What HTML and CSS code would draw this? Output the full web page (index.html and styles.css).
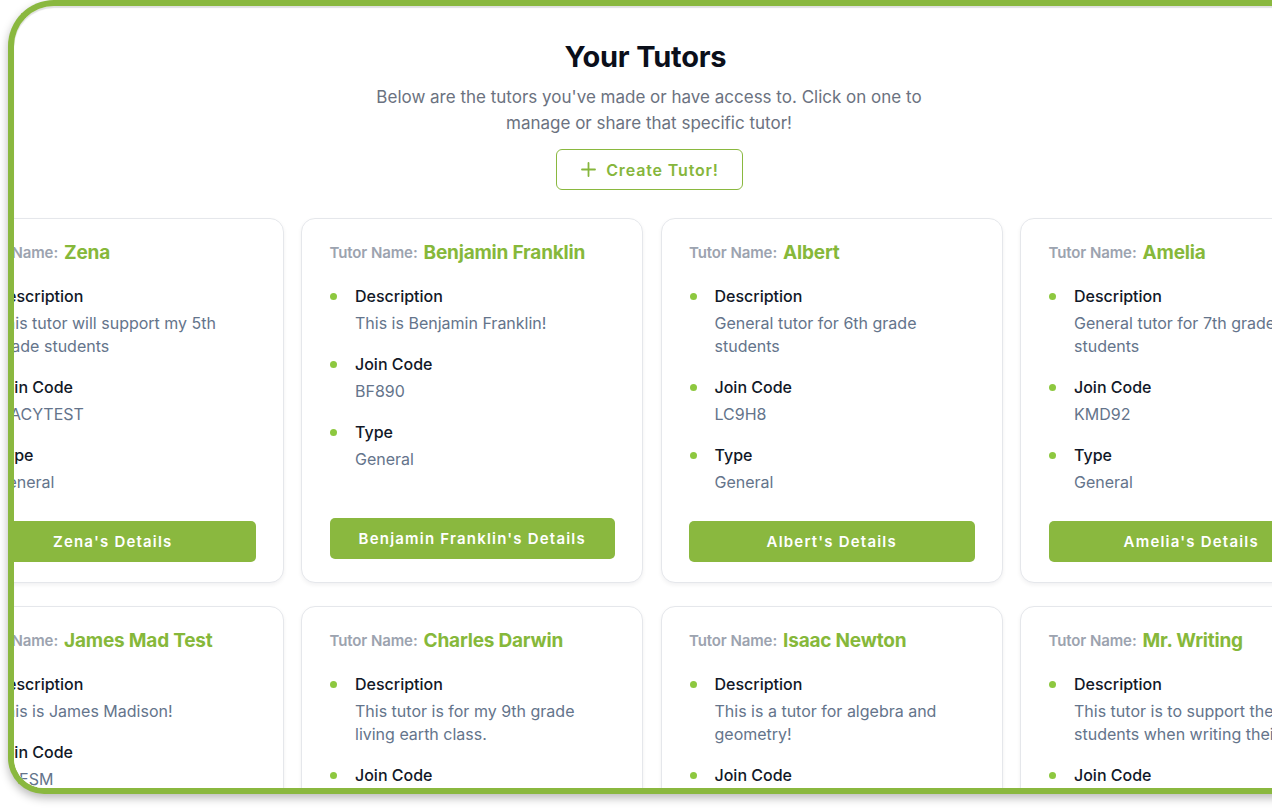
FILE: index.html
```html
<!DOCTYPE html>
<html lang="en">
<head>
<meta charset="utf-8">
<title>Your Tutors</title>
<link rel="stylesheet" href="styles.css">
</head>
<body>
<div class="frame">
  <div class="page">
    <header class="intro">
      <h1 class="title">Your Tutors</h1>
      <p class="subtitle">Below are the tutors you've made or have access to. Click on one to manage or share that specific tutor!</p>
      <button class="create-btn">
        <svg class="plus" width="15" height="15" viewBox="0 0 15 15"><path d="M7.5 1v13M1 7.5h13" stroke="currentColor" stroke-width="1.8" stroke-linecap="round" fill="none"/></svg>
        <span>Create Tutor!</span>
      </button>
    </header>

    <section class="grid">
      <article class="card">
        <h2 class="card-title"><span class="label-name">Tutor Name:</span> <span class="name">Zena</span></h2>
        <ul class="facts">
          <li><span class="fact-label">Description</span><span class="fact-value">This tutor will support my 5th grade students</span></li>
          <li><span class="fact-label">Join Code</span><span class="fact-value">MACYTEST</span></li>
          <li><span class="fact-label">Type</span><span class="fact-value">General</span></li>
        </ul>
        <button class="details-btn">Zena's Details</button>
      </article>

      <article class="card">
        <h2 class="card-title"><span class="label-name">Tutor Name:</span> <span class="name">Benjamin Franklin</span></h2>
        <ul class="facts">
          <li><span class="fact-label">Description</span><span class="fact-value">This is Benjamin Franklin!</span></li>
          <li><span class="fact-label">Join Code</span><span class="fact-value">BF890</span></li>
          <li><span class="fact-label">Type</span><span class="fact-value">General</span></li>
        </ul>
        <button class="details-btn">Benjamin Franklin's Details</button>
      </article>

      <article class="card">
        <h2 class="card-title"><span class="label-name">Tutor Name:</span> <span class="name">Albert</span></h2>
        <ul class="facts">
          <li><span class="fact-label">Description</span><span class="fact-value">General tutor for 6th grade students</span></li>
          <li><span class="fact-label">Join Code</span><span class="fact-value">LC9H8</span></li>
          <li><span class="fact-label">Type</span><span class="fact-value">General</span></li>
        </ul>
        <button class="details-btn">Albert's Details</button>
      </article>

      <article class="card">
        <h2 class="card-title"><span class="label-name">Tutor Name:</span> <span class="name">Amelia</span></h2>
        <ul class="facts">
          <li><span class="fact-label">Description</span><span class="fact-value">General tutor for 7th grade students</span></li>
          <li><span class="fact-label">Join Code</span><span class="fact-value">KMD92</span></li>
          <li><span class="fact-label">Type</span><span class="fact-value">General</span></li>
        </ul>
        <button class="details-btn">Amelia's Details</button>
      </article>

      <article class="card">
        <h2 class="card-title"><span class="label-name">Tutor Name:</span> <span class="name">James Mad Test</span></h2>
        <ul class="facts">
          <li><span class="fact-label">Description</span><span class="fact-value">This is James Madison!</span></li>
          <li><span class="fact-label">Join Code</span><span class="fact-value">JMESM</span></li>
          <li><span class="fact-label">Type</span><span class="fact-value">General</span></li>
        </ul>
        <button class="details-btn">James Mad Test's Details</button>
      </article>

      <article class="card">
        <h2 class="card-title"><span class="label-name">Tutor Name:</span> <span class="name">Charles Darwin</span></h2>
        <ul class="facts">
          <li><span class="fact-label">Description</span><span class="fact-value">This tutor is for my 9th grade living earth class.</span></li>
          <li><span class="fact-label">Join Code</span><span class="fact-value">CD123</span></li>
          <li><span class="fact-label">Type</span><span class="fact-value">General</span></li>
        </ul>
        <button class="details-btn">Charles Darwin's Details</button>
      </article>

      <article class="card">
        <h2 class="card-title"><span class="label-name">Tutor Name:</span> <span class="name">Isaac Newton</span></h2>
        <ul class="facts">
          <li><span class="fact-label">Description</span><span class="fact-value">This is a tutor for algebra and geometry!</span></li>
          <li><span class="fact-label">Join Code</span><span class="fact-value">IN456</span></li>
          <li><span class="fact-label">Type</span><span class="fact-value">General</span></li>
        </ul>
        <button class="details-btn">Isaac Newton's Details</button>
      </article>

      <article class="card">
        <h2 class="card-title"><span class="label-name">Tutor Name:</span> <span class="name">Mr. Writing</span></h2>
        <ul class="facts">
          <li><span class="fact-label">Description</span><span class="fact-value">This tutor is to support the students when writing their work</span></li>
          <li><span class="fact-label">Join Code</span><span class="fact-value">WR789</span></li>
          <li><span class="fact-label">Type</span><span class="fact-value">Writing</span></li>
        </ul>
        <button class="details-btn">Mr. Writing's Details</button>
      </article>
    </section>
  </div>
</div>
</body>
</html>
```

FILE: styles.css
```css
* { box-sizing: border-box; }

html, body {
  margin: 0;
  padding: 0;
  background: #ffffff;
  overflow: hidden;
  height: 810px;
}

body {
  font-family: Inter, "Noto Sans", "Liberation Sans", sans-serif;
  color: #111827;
}

.frame {
  margin-left: 8px;
  width: 1290px;
  height: 794px;
  border: 6px solid #8ab83f;
  border-right: none;
  border-radius: 46px 0 0 36px;
  background: #ffffff;
  overflow: hidden;
  box-shadow: 0 4px 10px rgba(0, 0, 0, 0.28), inset 0 2px 1px rgba(0, 0, 0, 0.12);
}

.page {
  width: 1270px;
  padding-top: 34px;
}

.intro {
  display: flex;
  flex-direction: column;
  align-items: center;
}

.title {
  margin: 0;
  padding-right: 7px;
  font-size: 29px;
  line-height: 34px;
  font-weight: 700;
  letter-spacing: -0.2px;
  color: #0b0f1a;
}

.subtitle {
  margin: 10px 0 0;
  width: 580px;
  text-align: center;
  font-size: 17px;
  line-height: 26px;
  color: #6b7280;
}

.create-btn {
  margin-top: 13px;
  width: 187px;
  height: 41px;
  display: flex;
  align-items: center;
  justify-content: center;
  gap: 10px;
  border: 1.5px solid #8ab83f;
  border-radius: 6px;
  background: #ffffff;
  color: #86b63c;
  font-family: inherit;
  font-size: 16px;
  font-weight: 600;
  letter-spacing: 0.85px;
  padding: 0 0 0 2px;
}

.plus { display: block; }

.grid {
  margin-top: 28px;
  margin-left: -72.5px;
  display: grid;
  grid-template-columns: repeat(4, 342px);
  column-gap: 17.5px;
  row-gap: 23px;
}

.card {
  border: 1.5px solid #e5e7eb;
  border-radius: 14px;
  background: #ffffff;
  box-shadow: 0 2px 4px rgba(15, 23, 42, 0.06);
  padding: 19px 27px 20px 27.5px;
  display: flex;
  flex-direction: column;
  align-items: stretch;
}

.card-title {
  margin: 0;
  height: 28px;
  display: flex;
  align-items: center;
  gap: 6px;
  white-space: nowrap;
}

.label-name {
  font-size: 15px;
  font-weight: 600;
  color: #9ca3af;
  letter-spacing: -0.1px;
}

.name {
  font-size: 19px;
  font-weight: 700;
  color: #86b83a;
  letter-spacing: -0.2px;
}

.facts {
  list-style: none;
  margin: 18px 0 0;
  padding: 0;
  min-height: 206px;
  display: flex;
  flex-direction: column;
  gap: 17.5px;
}

.facts li {
  position: relative;
  padding-left: 25.5px;
  display: flex;
  flex-direction: column;
  gap: 3.5px;
}

.facts li::before {
  content: "";
  position: absolute;
  left: 0.5px;
  top: 9px;
  width: 7px;
  height: 7px;
  border-radius: 50%;
  background: #8dc83f;
}

.fact-label {
  font-size: 16px;
  line-height: 24px;
  font-weight: 500;
  color: #111827;
}

.fact-value {
  font-size: 16px;
  line-height: 23px;
  color: #64748b;
}

.details-btn {
  margin-top: 27.5px;
  height: 41px;
  border: none;
  border-radius: 5px;
  background: #8ab83f;
  color: #ffffff;
  font-family: inherit;
  font-size: 15px;
  font-weight: 600;
  letter-spacing: 1.2px;
  white-space: nowrap;
}
```
